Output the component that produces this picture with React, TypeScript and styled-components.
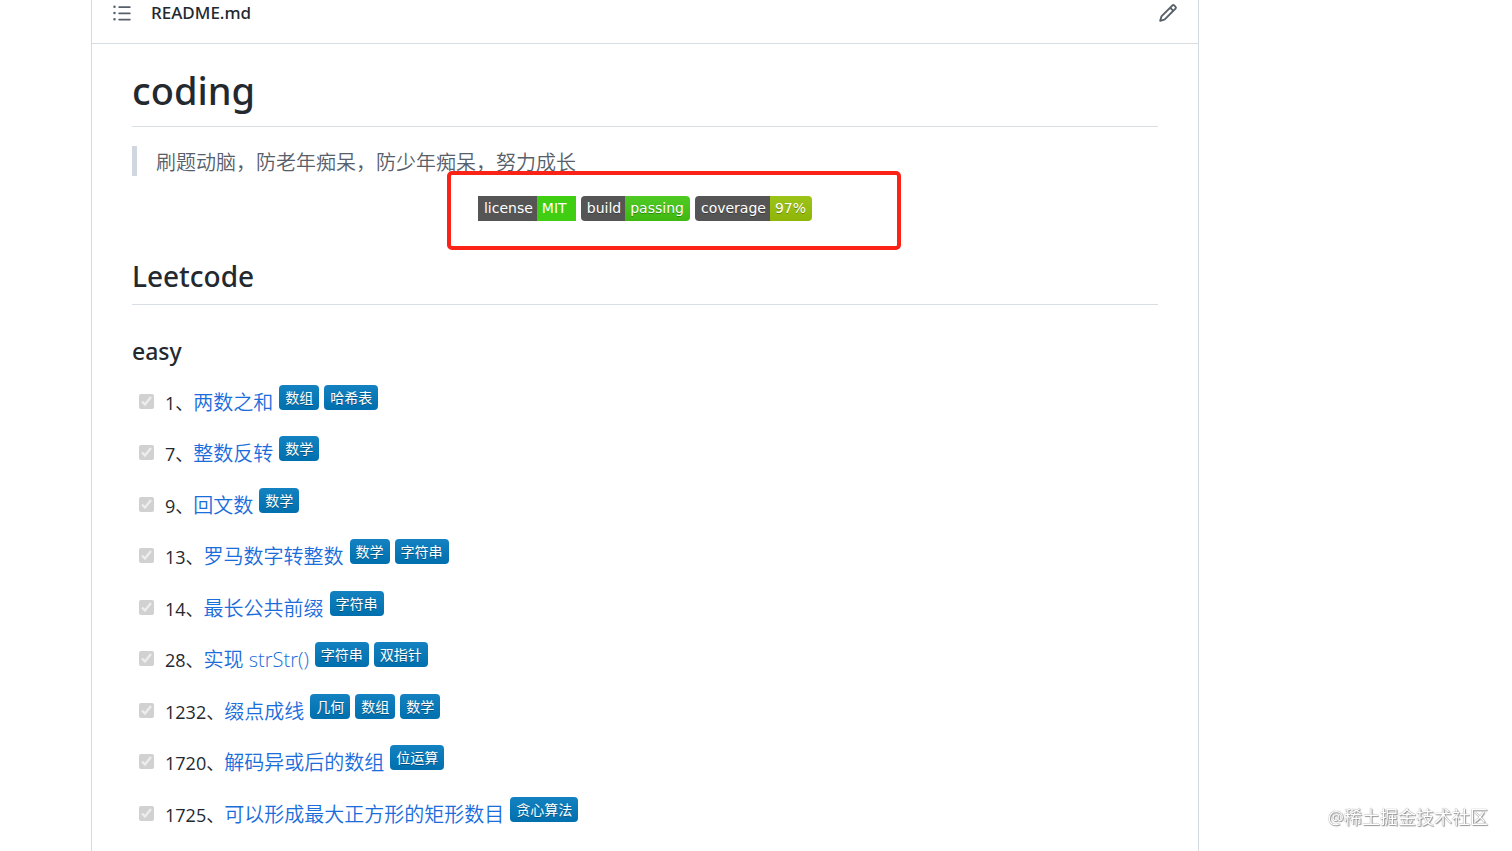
import React from "react";
import styled, { createGlobalStyle } from "styled-components";

const GlobalStyle = createGlobalStyle`
  * { box-sizing: border-box; }
  body {
    margin: 0;
    background: #fff;
    color: #24292f;
    font-family: "Open Sans", "Noto Sans CJK SC", sans-serif;
    font-size: 20px;
  }
  h1, h2, h3 {
    font-family: "Noto Sans", sans-serif;
    font-weight: 500;
  }
`;

const Panel = styled.main`
  min-height: 100vh;
  margin: 0 313px 0 91px;
  border: solid #d4dadf;
  border-width: 0 1px;
`;

const Header = styled.header`
  display: flex;
  align-items: center;
  padding: 0 20px 17px;
  border-bottom: 1px solid #d8dde1;
  line-height: 26px;
`;

const IconButton = styled.button`
  display: flex;
  padding: 0;
  border: 0;
  background: none;
  color: #57606a;
  cursor: pointer;
`;

const FileName = styled.span`
  flex: 1;
  margin-left: 19px;
  font-family: "Noto Sans", sans-serif;
  font-size: 17px;
  font-weight: 500;
`;

const Article = styled.article`
  padding: 22px 40px 0;
`;

const Title = styled.h1`
  margin: 0;
  padding-bottom: 12px;
  border-bottom: 1px solid #d8dee4;
  font-size: 38px;
  line-height: 48px;
`;

const Quote = styled.blockquote`
  margin: 19px 0 20px;
  padding: 4px 0 0 19px;
  border-left: 5px solid #d0d7de;
  color: #57606a;
  font-weight: 350;
  line-height: 26px;
`;

const ShieldRow = styled.div`
  position: relative;
  display: flex;
  justify-content: center;
  gap: 5px;
`;

const Highlight = styled.div`
  position: absolute;
  top: -25px;
  left: calc(50% - 198px);
  width: 454px;
  height: 79px;
  border: 4px solid #fb2318;
  border-radius: 5px;
`;

const Shield = styled.span<{ $flat?: boolean }>`
  display: flex;
  overflow: hidden;
  border-radius: ${(p) => (p.$flat ? 0 : 4)}px;
  color: #fff;
  font-family: "DejaVu Sans", sans-serif;
  font-size: 14px;
  line-height: 25px;
  text-shadow: ${(p) => (p.$flat ? "none" : "0 1px 0 rgba(1, 1, 1, 0.3)")};
`;

const ShieldLabel = styled.span`
  padding: 0 4px 0 6px;
  background: #555;
`;

const ShieldValue = styled.span<{ $color: string }>`
  min-width: 39px;
  padding: 0 6px 0 5px;
  background: ${(p) => p.$color};
`;

const Section = styled.h2`
  margin: 36px 0 0;
  padding-bottom: 9px;
  border-bottom: 1px solid #d8dee4;
  font-size: 28px;
  line-height: 38px;
`;

const Level = styled.h3`
  margin: 30px 0 17px;
  font-size: 23px;
  line-height: 33px;
`;

const Tasks = styled.ul`
  display: grid;
  grid-auto-rows: 51px 52px;
  margin: 0;
  padding: 0 0 0 7px;
  list-style: none;
`;

const Task = styled.li`
  display: flex;
  align-items: flex-start;
  line-height: 36px;
`;

const Check = styled.input`
  width: 15px;
  height: 15px;
  margin: 9px 11px 0 0;
`;

const TaskNumber = styled.label`
  font-size: 18px;
`;

const TaskLink = styled.a`
  color: #1a6ddb;
  font-weight: 350;
  text-decoration: none;
`;

const Tags = styled.span`
  display: flex;
  gap: 5px;
  margin-left: 6px;
`;

const Tag = styled.span`
  padding: 0 6px;
  border-radius: 4px;
  background: linear-gradient(#1482c0, #006fae);
  color: #fff;
  font-size: 14px;
  line-height: 25px;
  text-shadow: 0 1px 0 rgba(1, 1, 1, 0.3);
`;

const Watermark = styled.div`
  position: fixed;
  right: 24px;
  bottom: 20px;
  color: #fff;
  font-size: 18px;
  line-height: 28px;
  text-shadow: 0 0 1px #666, 1px 1px 1px #999;
`;

type TaskData = { id: number; name: string; tags: string[] };

const tasks: TaskData[] = [
  { id: 1, name: "两数之和", tags: ["数组", "哈希表"] },
  { id: 7, name: "整数反转", tags: ["数学"] },
  { id: 9, name: "回文数", tags: ["数学"] },
  { id: 13, name: "罗马数字转整数", tags: ["数学", "字符串"] },
  { id: 14, name: "最长公共前缀", tags: ["字符串"] },
  { id: 28, name: "实现 strStr()", tags: ["字符串", "双指针"] },
  { id: 1232, name: "缀点成线", tags: ["几何", "数组", "数学"] },
  { id: 1720, name: "解码异或后的数组", tags: ["位运算"] },
  { id: 1725, name: "可以形成最大正方形的矩形数目", tags: ["贪心算法"] },
];

const shields = [
  { label: "license", value: "MIT", color: "#3fce11", flat: true },
  { label: "build", value: "passing", color: "linear-gradient(#4fca24, #40b812)" },
  { label: "coverage", value: "97%", color: "linear-gradient(#9cc318, #8fb508)" },
];

const ListIcon = () => (
  <svg width="20" height="20" viewBox="0 0 16 16" fill="currentColor" aria-hidden="true">
    <path d="M2 4a1 1 0 100-2 1 1 0 000 2zm3.75-1.5a.75.75 0 000 1.5h8.5a.75.75 0 000-1.5h-8.5zm0 5a.75.75 0 000 1.5h8.5a.75.75 0 000-1.5h-8.5zm0 5a.75.75 0 000 1.5h8.5a.75.75 0 000-1.5h-8.5zM3 8a1 1 0 11-2 0 1 1 0 012 0zm-1 6a1 1 0 100-2 1 1 0 000 2z" />
  </svg>
);

const PencilIcon = () => (
  <svg width="20" height="20" viewBox="0 0 16 16" fill="currentColor" aria-hidden="true">
    <path
      fillRule="evenodd"
      d="M11.013 1.427a1.75 1.75 0 012.474 0l1.086 1.086a1.75 1.75 0 010 2.474l-8.61 8.61c-.21.21-.47.364-.756.445l-3.251.93a.75.75 0 01-.927-.928l.929-3.25a1.75 1.75 0 01.445-.758l8.61-8.61zm1.414 1.06a.25.25 0 00-.354 0L10.811 3.75l1.439 1.44 1.263-1.263a.25.25 0 000-.354l-1.086-1.086zM11.189 6.25L9.75 4.81l-6.286 6.287a.25.25 0 00-.064.108l-.558 1.953 1.953-.558a.249.249 0 00.108-.064l6.286-6.286z"
    />
  </svg>
);

export default function App() {
  return (
    <>
      <GlobalStyle />
      <Panel>
        <Header>
          <IconButton type="button" aria-label="Table of contents">
            <ListIcon />
          </IconButton>
          <FileName>README.md</FileName>
          <IconButton type="button" aria-label="Edit file">
            <PencilIcon />
          </IconButton>
        </Header>
        <Article>
          <Title>coding</Title>
          <Quote>刷题动脑，防老年痴呆，防少年痴呆，努力成长</Quote>
          <ShieldRow>
            {shields.map((s) => (
              <Shield key={s.label} $flat={s.flat}>
                <ShieldLabel>{s.label}</ShieldLabel>
                <ShieldValue $color={s.color}>{s.value}</ShieldValue>
              </Shield>
            ))}
            <Highlight />
          </ShieldRow>
          <Section>Leetcode</Section>
          <Level>easy</Level>
          <Tasks>
            {tasks.map((t) => (
              <Task key={t.id}>
                <Check type="checkbox" id={`task-${t.id}`} checked disabled readOnly />
                <TaskNumber htmlFor={`task-${t.id}`}>{t.id}、</TaskNumber>
                <TaskLink href={`#${t.id}`}>{t.name}</TaskLink>
                <Tags>
                  {t.tags.map((tag) => (
                    <Tag key={tag}>{tag}</Tag>
                  ))}
                </Tags>
              </Task>
            ))}
          </Tasks>
        </Article>
      </Panel>
      <Watermark>@稀土掘金技术社区</Watermark>
    </>
  );
}
